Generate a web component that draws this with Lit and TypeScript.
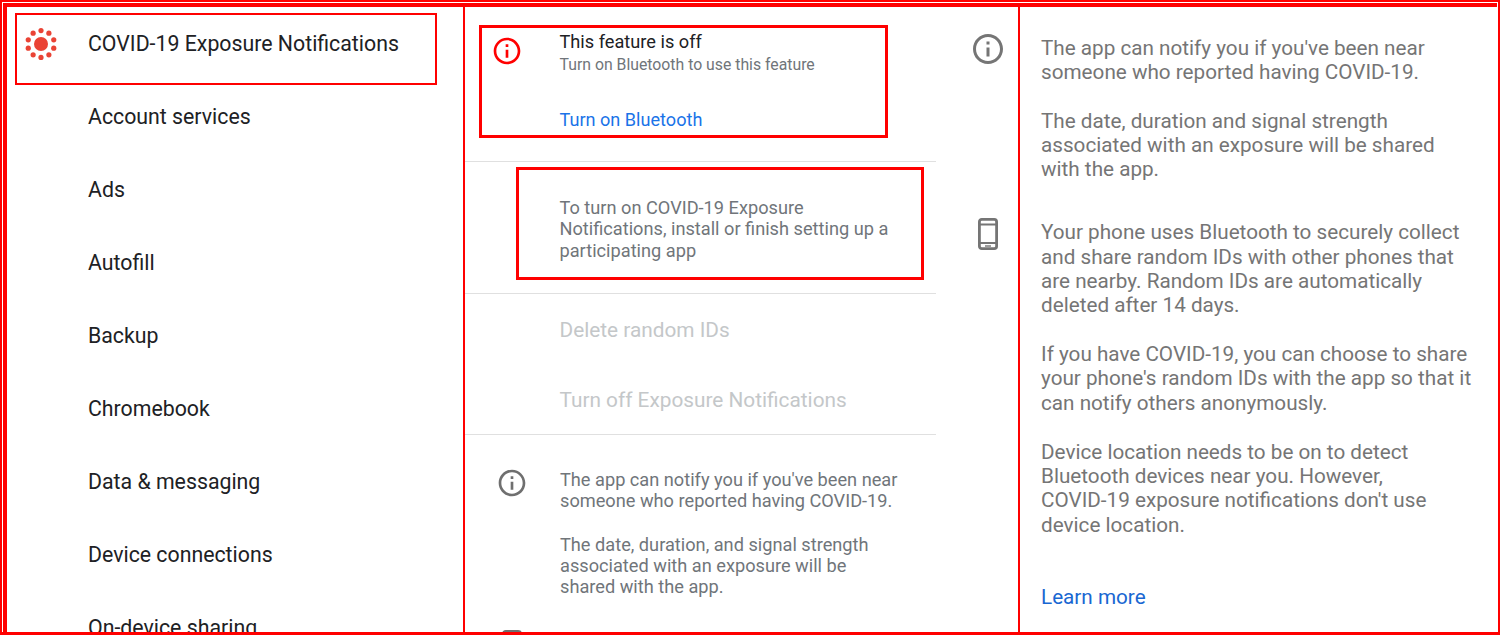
import { LitElement, html, css, svg } from "lit";
import { customElement } from "lit/decorators.js";

const INFO = "M11 7h2v2h-2zm0 4h2v6h-2zm1-9C6.48 2 2 6.48 2 12s4.48 10 10 10 10-4.48 10-10S17.52 2 12 2zm0 18c-4.41 0-8-3.59-8-8s3.59-8 8-8 8 3.59 8 8-3.59 8-8 8z";

const infoIcon = (cls: string) => html`<svg class=${cls} viewBox="0 0 24 24"><path d=${INFO}></path></svg>`;

const phoneIcon = (cls: string) => html`<svg class=${cls} viewBox="0 0 20 32">
  <rect x="1.4" y="1.4" width="17.2" height="29.2" rx="2.4" fill="none" stroke="currentColor" stroke-width="2.8"></rect>
  <path d="M1 6.6h18M1 25h18" fill="none" stroke="currentColor" stroke-width="2"></path>
  <path d="M7 28h6" fill="none" stroke="currentColor" stroke-width="1.4"></path>
</svg>`;

const dots = Array.from({ length: 10 }, (_, i) => {
  const a = (i * 36 * Math.PI) / 180;
  return svg`<circle cx=${16 + 13.4 * Math.sin(a)} cy=${16 - 13.4 * Math.cos(a)} r="2.6"></circle>`;
});

const NAV = ["Account services", "Ads", "Autofill", "Backup", "Chromebook", "Data & messaging", "Device connections", "On-device sharing"];

@customElement("app-root")
export class AppRoot extends LitElement {
  static styles = css`
    :host { display: block; width: 1500px; height: 635px; overflow: hidden; background: #fff; }
    * { box-sizing: border-box; }
    .frame { width: 1500px; height: 635px; border: solid #f00; border-width: 2px 2px 3px 2px; padding: 1px 1px 0 1px; background: #fff; overflow: hidden; }
    .inner { height: 100%; border: solid #f00; border-width: 4px 0 0 4px; display: flex; overflow: hidden; background: #fff; }

    .nav { flex: none; border-right: 2px solid #f00; font-family: Roboto, sans-serif; padding-top: 6px; height: 100%; overflow: hidden; width: 458px; }
    .nav-first { margin-left: 8px; width: 422px; height: 72px; border: 2px solid #f00; display: flex; align-items: flex-start; }
    .covid { width: 32px; height: 32px; margin: 13px 0 0 8px; fill: #ea4335; flex: none; }
    .nav-first .label { margin: 14px 0 0 31px; }
    .label { font-size: 21.3px; line-height: 30px; color: #202124; white-space: nowrap; }
    .nav-item { height: 73px; padding: 17px 0 0 81px; }

    .mid { width: 555px; flex: none; border-right: 2px solid #f00; display: flex; height: 100%; overflow: hidden; font-family: Roboto, sans-serif; }
    .mid-main { width: 471px; flex: none; padding-top: 18px; }
    .mid-side { flex: 1; display: flex; flex-direction: column; align-items: center; padding-left: 22px; }
    .side-info { width: 36px; height: 36px; margin-top: 24px; fill: #757575; }
    .side-phone { width: 20px; height: 32px; margin-top: 151px; color: #757575; }

    .box { border: 3px solid #f00; height: 113px; }
    .box-off { margin-left: 14px; width: 409px; display: flex; }
    .alert { width: 32px; height: 32px; fill: #f00; margin: 7px 0 0 9px; flex: none; }
    .off-text { margin-left: 36.5px; padding-top: 2px; white-space: nowrap; }
    .off-title { font-size: 18.2px; line-height: 23px; color: #202124; }
    .off-sub { font-size: 15.8px; line-height: 23px; color: #70757a; }
    .off-link { font-size: 18.1px; line-height: 24px; color: #1a73e8; margin-top: 32px; }
    .rule { height: 1px; background: #e0e0e0; }
    .rule-a { margin-top: 23px; }
    .box-setup { margin: 5px 0 0 51px; width: 408px; padding: 27px 0 0 40.5px; font-size: 18.2px; line-height: 21.4px; color: #70757a; white-space: nowrap; }
    .rule-b { margin-top: 13px; }
    .disabled { font-size: 20.8px; line-height: 26px; color: #c4c7c9; padding-left: 94.5px; white-space: nowrap; }
    .del { margin-top: 23px; }
    .turnoff { margin-top: 44px; }
    .rule-c { margin-top: 21px; }
    .row { display: flex; margin-top: 34px; }
    .row-info { width: 32px; height: 32px; fill: #6f6f6f; margin: -2px 0 0 31px; flex: none; }
    .row-text { margin-left: 32px; font-size: 18.2px; line-height: 21.2px; color: #70757a; white-space: nowrap; }
    .row-text p { margin: 0 0 22.3px; }
    .row-phone { display: block; width: 20px; height: 32px; margin: 10px 0 0 37px; color: #6f6f6f; }

    .right { flex: 1; padding: 29px 0 0 21px; font-family: Roboto, sans-serif; font-size: 20.7px; line-height: 24.3px; color: #757575; overflow: hidden; white-space: nowrap; }
    .right p { margin: 0 0 24.3px; }
    .right p.wide { margin-bottom: 38.7px; }
    .right p.pre { margin-bottom: 25px; }
    .right p.more { margin-bottom: 48px; }
    .learn { color: #1967d2; font-size: 20.7px; }
  `;

  render() {
    return html`<div class="frame"><div class="inner">
      <section class="nav">
        <div class="nav-first">
          <svg class="covid" viewBox="0 0 32 32"><circle cx="16" cy="16" r="7"></circle>${dots}</svg>
          <div class="label">COVID-19 Exposure Notifications</div>
        </div>
        ${NAV.map((n) => html`<div class="nav-item"><div class="label">${n}</div></div>`)}
      </section>
      <section class="mid">
        <div class="mid-main">
          <div class="box box-off">
            ${infoIcon("alert")}
            <div class="off-text">
              <div class="off-title">This feature is off</div>
              <div class="off-sub">Turn on Bluetooth to use this feature</div>
              <div class="off-link">Turn on Bluetooth</div>
            </div>
          </div>
          <div class="rule rule-a"></div>
          <div class="box box-setup">To turn on COVID-19 Exposure<br />Notifications, install or finish setting up a<br />participating app</div>
          <div class="rule rule-b"></div>
          <div class="disabled del">Delete random IDs</div>
          <div class="disabled turnoff">Turn off Exposure Notifications</div>
          <div class="rule rule-c"></div>
          <div class="row">
            ${infoIcon("row-info")}
            <div class="row-text">
              <p>The app can notify you if you've been near<br />someone who reported having COVID-19.</p>
              <p>The date, duration, and signal strength<br />associated with an exposure will be<br />shared with the app.</p>
            </div>
          </div>
          ${phoneIcon("row-phone")}
        </div>
        <div class="mid-side">
          ${infoIcon("side-info")}
          ${phoneIcon("side-phone")}
        </div>
      </section>
      <section class="right">
        <p>The app can notify you if you've been near<br />someone who reported having COVID-19.</p>
        <p class="wide">The date, duration and signal strength<br />associated with an exposure will be shared<br />with the app.</p>
        <p>Your phone uses Bluetooth to securely collect<br />and share random IDs with other phones that<br />are nearby. Random IDs are automatically<br />deleted after 14 days.</p>
        <p class="pre">If you have COVID-19, you can choose to share<br />your phone's random IDs with the app so that it<br />can notify others anonymously.</p>
        <p class="more">Device location needs to be on to detect<br />Bluetooth devices near you. However,<br />COVID-19 exposure notifications don't use<br />device location.</p>
        <div class="learn">Learn more</div>
      </section>
    </div></div>`;
  }
}
